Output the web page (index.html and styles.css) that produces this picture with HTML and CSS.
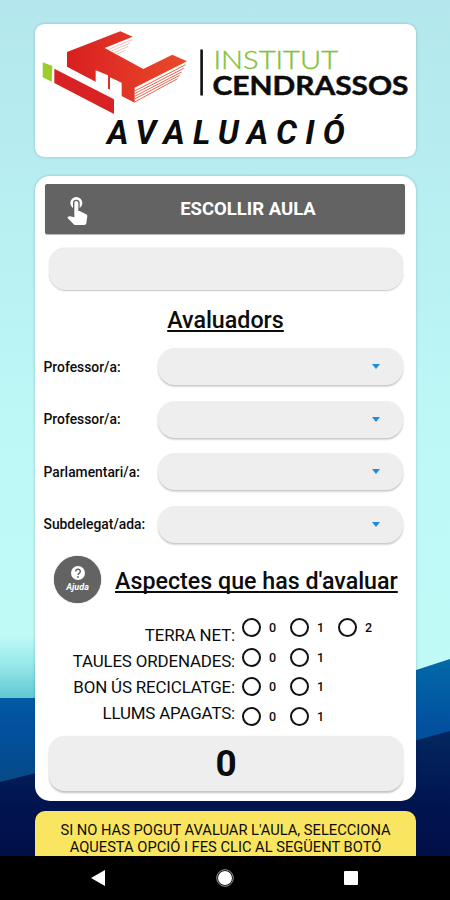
FILE: index.html
```html
<!DOCTYPE html>
<html lang="ca">
<head>
<meta charset="utf-8">
<title>Avaluació</title>
<link rel="stylesheet" href="styles.css">
</head>
<body>
<div class="app">
  <svg class="backdrop" viewBox="0 0 450 856" preserveAspectRatio="none" aria-hidden="true">
    <defs>
      <linearGradient id="sky" x1="0" y1="0" x2="0" y2="1"><stop offset="0" stop-color="#b3e7ed"/><stop offset=".55" stop-color="#bef9f7"/><stop offset="1" stop-color="#c2fcf8"/></linearGradient>
      <linearGradient id="mist" x1="0" y1="0" x2="0" y2="1"><stop offset="0" stop-color="#c0fbf8"/><stop offset=".4" stop-color="#98e8ea"/><stop offset="1" stop-color="#4dbccb"/></linearGradient>
      <linearGradient id="hill" x1="0" y1="0" x2="0" y2="1"><stop offset="0" stop-color="#0269a6"/><stop offset=".35" stop-color="#0250a0"/><stop offset=".6" stop-color="#064b88"/></linearGradient>
      <linearGradient id="deep" x1="0" y1="0" x2="0" y2="1"><stop offset="0" stop-color="#03275f"/><stop offset=".6" stop-color="#011450"/><stop offset="1" stop-color="#010f47"/></linearGradient>
    </defs>
    <rect width="450" height="856" fill="url(#sky)"/>
    <path d="M0 634 H40 V710 H0Z" fill="url(#mist)"/>
    <path d="M0 698 H40 L410 672 L450 659 V856 H0Z" fill="url(#hill)"/>
    <path d="M0 782 L40 772 L410 742 L450 731 V856 H0Z" fill="url(#deep)"/>
  </svg>

  <main class="content">
    <header class="card brand">
      <svg class="logo" viewBox="35 24 381 90" role="img" aria-label="Institut Cendrassos">
        <defs><linearGradient id="red" x1="0" x2="1" y1="0" y2="0"><stop offset="0" stop-color="#d91f20"/><stop offset="1" stop-color="#ea4b2b"/></linearGradient></defs>
        <g transform="translate(30 15) scale(.33333)">
          <path d="M38 142 L67 153 L65 200 L38 187Z" fill="#9bce28"/>
          <path d="M73 161 L252 253 V297 L73 204Z" fill="#d92223"/>
          <path d="M111 111 L271 49 L308 65 L224 99 L340 162 L427 119 L471 139 L314 218 V263 L275 243 V203 L240 187 V224 L234 221 V181 L197 166 V200 L111 155Z" fill="url(#red)"/>
          <g fill="none" stroke="#e9644f" stroke-width="3">
            <path d="M314 228 L467 149 M314 236 L461 160 M314 244 L455 171 M314 252 L449 181 M314 261 L443 191"/>
            <path d="M234 104 L307 74 M241 109 L301 84 M249 114 L294 95 M258 119 L286 106" stroke="#f0a39b" stroke-width="2"/>
          </g>
        </g>
        <rect x="200.300" y="49.500" width="2.600" height="46" fill="#111"/>
        <text class="logo-light" x="213.500" y="69" textLength="124.500" lengthAdjust="spacingAndGlyphs">INSTITUT</text>
        <text class="logo-bold" x="212.500" y="95.300" textLength="196" lengthAdjust="spacingAndGlyphs">CENDRASSOS</text>
      </svg>
      <h1 class="title">AVALUACIÓ</h1>
    </header>

    <section class="card form">
      <button class="pick">
        <svg class="touch" viewBox="0 0 24 24"><path d="M9 11.240V7.500a2.500 2.500 0 0 1 5 0v3.740c1.210-.810 2-2.180 2-3.740a4.500 4.500 0 0 0-9 0c0 1.560.790 2.930 2 3.740zm9.840 4.630-4.540-2.260c-.170-.070-.350-.110-.540-.110H13v-6a1.500 1.500 0 0 0-3 0v10.740l-3.430-.720c-.080-.010-.150-.030-.240-.030-.310 0-.590.130-.790.330l-.790.800 4.940 4.940c.270.270.650.440 1.060.440h6.790c.750 0 1.330-.550 1.440-1.280l.750-5.270c.010-.070.020-.140.020-.200 0-.620-.380-1.160-.910-1.380z"/></svg>
        <span>ESCOLLIR AULA</span>
      </button>
      <div class="field room"></div>
      <h2 class="heading">Avaluadors</h2>
      <div class="people">
        <div class="person"><span>Professor/a:</span><div class="field select"><i class="caret"></i></div></div>
        <div class="person"><span>Professor/a:</span><div class="field select"><i class="caret"></i></div></div>
        <div class="person"><span>Parlamentari/a:</span><div class="field select"><i class="caret"></i></div></div>
        <div class="person"><span>Subdelegat/ada:</span><div class="field select"><i class="caret"></i></div></div>
      </div>
      <div class="aspects">
        <button class="help">
          <svg viewBox="0 0 14 14"><circle cx="7" cy="7" r="7" fill="#fff"/><path d="M4.700 5.500a2.300 2.200 0 1 1 3.500 1.800C7.400 7.900 7 8.200 7 9" fill="none" stroke="#616161" stroke-width="1.500"/><circle cx="7" cy="11" r=".9" fill="#616161"/></svg>
          <span>Ajuda</span>
        </button>
        <h2 class="heading">Aspectes que has d'avaluar</h2>
      </div>
      <div class="ratings">
        <div class="labels">
          <span>TERRA NET:</span><span>TAULES ORDENADES:</span><span>BON ÚS RECICLATGE:</span><span>LLUMS APAGATS:</span>
        </div>
        <div class="options">
          <div class="option-row"><label><i></i>0</label><label><i></i>1</label><label><i></i>2</label></div>
          <div class="option-row"><label><i></i>0</label><label><i></i>1</label></div>
          <div class="option-row"><label><i></i>0</label><label><i></i>1</label></div>
          <div class="option-row"><label><i></i>0</label><label><i></i>1</label></div>
        </div>
      </div>
      <div class="field total">0</div>
    </section>

    <section class="notice">SI NO HAS POGUT AVALUAR L'AULA, SELECCIONA<br>AQUESTA OPCIÓ I FES CLIC AL SEGÜENT BOTÓ</section>
  </main>

  <nav class="navbar">
    <svg viewBox="0 0 16 18"><path d="M15 1 V17 L1 9Z"/></svg>
    <svg viewBox="0 0 18 18"><circle cx="9" cy="9" r="7" /><circle cx="9" cy="9" r="8.300" fill="none" stroke="#aaa" stroke-width=".9"/></svg>
    <svg viewBox="0 0 16 18"><rect x="1" y="2" width="14" height="14" rx="1"/></svg>
  </nav>
</div>
</body>
</html>
```
FILE: styles.css
```css
* { box-sizing: border-box; }
body { margin: 0; font-family: Roboto, sans-serif; color: #0c0c0c; }
button { border: 0; padding: 0; font: inherit; color: #fff; background: #636363; }

.app { position: relative; display: flex; flex-direction: column; width: 450px; height: 900px; overflow: hidden; background: #000; }
.backdrop { position: absolute; top: 0; left: 0; width: 450px; height: 856px; }

.content { position: relative; flex: 1; min-height: 0; overflow: hidden; padding: 24px 34px 0 35px; }
.card { background: #fff; box-shadow: 0 0 3px rgba(0, 40, 60, .25); }

.brand { height: 133px; border-radius: 9px; }
.logo { display: block; width: 381px; height: 90px; }
.logo-light { font: 300 26px Lato, sans-serif; fill: #83c238; stroke: #83c238; stroke-width: .4; }
.logo-bold { font: 700 26px Lato, sans-serif; fill: #0c0c0c; stroke: #0c0c0c; stroke-width: .5; }
.title { margin: 0 0 0 72px; font-size: 33px; line-height: 37px; font-weight: 700; font-style: italic; letter-spacing: 8.150px; white-space: nowrap; }

.form { height: 625px; margin-top: 19px; padding: 8px 10px 0; border-radius: 15px; }
.pick { display: flex; align-items: center; width: 360px; height: 50px; border-radius: 2px; font-size: 18.500px; font-weight: 700; box-shadow: 0 1px 1px rgba(0, 0, 0, .3); }
.touch { width: 32px; height: 32px; margin-left: 16px; fill: #fff; }
.pick span { flex: 1; padding-right: 1px; margin-left: -1px; }

.field { background: #eee; box-shadow: 0 1.500px 2px rgba(0, 0, 0, .24); }
.room { height: 42px; margin: 14px 3px 0 4px; border-radius: 17px; box-shadow: 0 .5px 1.500px rgba(0, 0, 0, .22); }

.heading { margin: 0; font-size: 23.250px; line-height: 28px; font-weight: 500; white-space: nowrap; text-decoration: underline; text-decoration-thickness: 1.500px; text-underline-offset: 2px; text-decoration-skip-ink: none; }
.form > .heading { margin-top: 16px; text-align: center; }

.people { display: grid; row-gap: 15.500px; margin: 14px 3px 0 -1.500px; }
.person { display: grid; grid-template-columns: 114px 1fr; align-items: center; font-size: 13.850px; font-weight: 500; white-space: nowrap; }
.select { display: flex; align-items: center; justify-content: flex-end; height: 37px; padding-right: 23.500px; border-radius: 17px; }
.caret { border: 4.500px solid transparent; border-top: 5px solid #1d8ce0; border-bottom: 0; }

.aspects { display: flex; align-items: center; gap: 14px; margin: 13px 0 0 9px; }
.aspects .heading { padding-top: 3px; }
.help { display: flex; flex-direction: column; align-items: center; width: 47px; height: 47px; padding-top: 10px; border-radius: 50%; box-shadow: 0 0 1px #444; font-size: 9px; line-height: 15px; font-weight: 700; font-style: italic; }
.help svg { width: 14px; height: 14px; }

.ratings { display: flex; height: 124px; margin-top: 10px; }
.labels { display: flex; flex-direction: column; width: 190px; padding-top: 9px; text-align: right; font-size: 16.900px; line-height: 26px; letter-spacing: -.15px; white-space: nowrap; }
.options { padding: .5px 0 0 6.500px; }
.option-row { display: flex; height: 29.600px; }
.option-row label { display: flex; align-items: center; width: 48px; gap: 8.500px; font-size: 12.500px; font-weight: 500; }
.option-row i { width: 19px; height: 19px; border: 2px solid #111; border-radius: 50%; }

.total { display: flex; align-items: center; justify-content: center; height: 55px; margin: -1px 3px 0 4px; border-radius: 16px; font-size: 37px; font-weight: 700; }

.notice { height: 80px; margin-top: 10px; padding-top: 11px; border-radius: 10px; background: #f9e55f; text-align: center; font-size: 14.700px; line-height: 17.300px; white-space: nowrap; }

.navbar { position: relative; display: flex; align-items: center; justify-content: space-between; height: 44px; padding: 0 91px 0 90px; background: #000; }
.navbar svg { height: 18px; fill: #fff; }
```
